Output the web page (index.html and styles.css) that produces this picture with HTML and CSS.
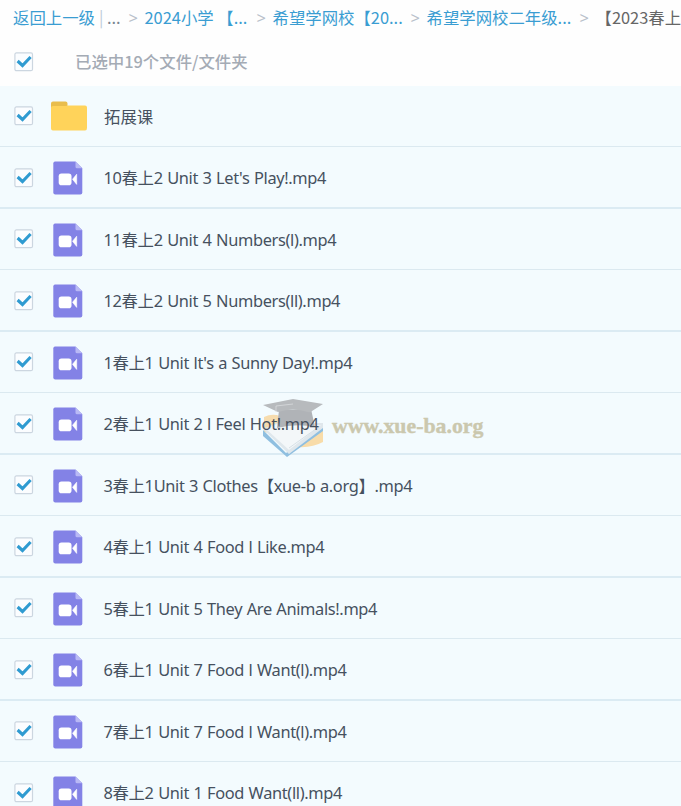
FILE: index.html
```html
<!DOCTYPE html>
<html lang="zh-CN">
<head>
  <meta charset="UTF-8">
  <meta name="viewport" content="width=device-width, initial-scale=1.0">
  <title>文件列表</title>
  <link rel="stylesheet" href="styles.css">
</head>
<body>

  <!-- shared icons -->
  <svg class="icon-defs" width="0" height="0">
    <symbol id="check" viewBox="0 0 20 20">
      <rect x="0.9" y="0.9" width="17.6" height="17.8" rx="1.5" fill="#fbfdff" stroke="#ccd6e0" stroke-width="1.2"/>
      <path d="M3.6 9 L8.5 13.5 L16.6 5" fill="none" stroke="#2f9bd1" stroke-width="3.1"/>
    </symbol>
    <symbol id="folder" viewBox="0 0 36 30">
      <path d="M0 12 V2.5 Q0 0.5 2 0.5 H14.5 Q16.5 0.5 16.5 2.5 V7 H0 Z" fill="#e9bd4c"/>
      <path d="M0 6.5 Q0 5 2 5 H15 L17 4.5 H34 Q36 4.5 36 6.5 V27 Q36 29.5 34 29.5 H2 Q0 29.5 0 27.5 Z" fill="#ffd35a"/>
    </symbol>
    <symbol id="video" viewBox="0 0 30 34">
      <path d="M2 0.5 H22.5 L29.3 7.3 V31.5 Q29.3 33.5 27.3 33.5 H2.3 Q0.3 33.5 0.3 31.5 V2.5 Q0.3 0.5 2 0.5 Z" fill="#8382e6"/>
      <path d="M22.5 0.5 L29.3 7.3 H24 Q22.5 7.3 22.5 5.8 Z" fill="#b9b9f5"/>
      <rect x="5.7" y="12.4" width="12.8" height="11.8" rx="2.8" fill="#fff"/>
      <path d="M19.5 18.3 L23.7 13.2 V23.4 Z" fill="#fff" stroke="#fff" stroke-width="0.6" stroke-linejoin="round"/>
    </symbol>
  </svg>

  <nav class="breadcrumb">
    <a class="crumb crumb-back">返回上一级</a><span class="divider">|</span><span class="dots">...</span>
    <span class="arrow">&gt;</span>
    <a class="crumb crumb-year">2024小学 【...</a>
    <span class="arrow">&gt;</span>
    <a class="crumb crumb-school">希望学网校【20...</a>
    <span class="arrow">&gt;</span>
    <a class="crumb crumb-grade">希望学网校二年级...</a>
    <span class="arrow">&gt;</span>
    <span class="current">【2023春上</span>
  </nav>

  <div class="selection">
    <svg class="check"><use href="#check"/></svg>
    <span class="selection-text">已选中19个文件/文件夹</span>
  </div>

  <ul class="file-list">
    <li class="file"><svg class="check"><use href="#check"/></svg><svg class="folder"><use href="#folder"/></svg><span class="name">拓展课</span></li>
    <li class="file"><svg class="check"><use href="#check"/></svg><svg class="video"><use href="#video"/></svg><span class="name">10春上2 Unit 3 Let's Play!.mp4</span></li>
    <li class="file"><svg class="check"><use href="#check"/></svg><svg class="video"><use href="#video"/></svg><span class="name">11春上2 Unit 4 Numbers(l).mp4</span></li>
    <li class="file"><svg class="check"><use href="#check"/></svg><svg class="video"><use href="#video"/></svg><span class="name">12春上2 Unit 5 Numbers(ll).mp4</span></li>
    <li class="file"><svg class="check"><use href="#check"/></svg><svg class="video"><use href="#video"/></svg><span class="name">1春上1 Unit lt's a Sunny Day!.mp4</span></li>
    <li class="file"><svg class="check"><use href="#check"/></svg><svg class="video"><use href="#video"/></svg><span class="name">2春上1 Unit 2 l Feel Hot!.mp4</span></li>
    <li class="file"><svg class="check"><use href="#check"/></svg><svg class="video"><use href="#video"/></svg><span class="name">3春上1Unit 3 Clothes【xue-b a.org】.mp4</span></li>
    <li class="file"><svg class="check"><use href="#check"/></svg><svg class="video"><use href="#video"/></svg><span class="name">4春上1 Unit 4 Food l Like.mp4</span></li>
    <li class="file"><svg class="check"><use href="#check"/></svg><svg class="video"><use href="#video"/></svg><span class="name">5春上1 Unit 5 They Are Animals!.mp4</span></li>
    <li class="file"><svg class="check"><use href="#check"/></svg><svg class="video"><use href="#video"/></svg><span class="name">6春上1 Unit 7 Food l Want(l).mp4</span></li>
    <li class="file"><svg class="check"><use href="#check"/></svg><svg class="video"><use href="#video"/></svg><span class="name">7春上1 Unit 7 Food l Want(l).mp4</span></li>
    <li class="file"><svg class="check"><use href="#check"/></svg><svg class="video"><use href="#video"/></svg><span class="name">8春上2 Unit 1 Food Want(ll).mp4</span></li>
  </ul>

  <div class="watermark">
    <svg class="watermark-logo" viewBox="0 0 62 60">
      <path d="M2 19 Q10 15 18 18 L28 40 L2 34 Z" fill="#f6dcae"/>
      <path d="M34 44 L61 27 V44 Q50 50 36 49 Z" fill="#f8dca9"/>
      <path d="M1 32 L24 55 L61 28 V33 L25 59 L1 38 Z" fill="#8fbfe0"/>
      <path d="M1 31 L14 25 L61 25 V30 L27 56 Z" fill="#dfe7ec"/>
      <path d="M4 31 L15 26 L59 27 L27 52 Z" fill="#f3f7f9"/>
      <path d="M27 50 L58 28" fill="none" stroke="#cfdae1" stroke-width="0.8"/>
      <path d="M17 12 L49 11 L53 29 Q34 25 15 30 Z" fill="#b0b3b7"/>
      <path d="M1 7 L31 1 L61 6 L50 13 Q48 15 46 14 Q31 9 16 14 Z" fill="#b7babd"/>
      <path d="M31 6 L14 8 V14" fill="none" stroke="#d8dadd" stroke-width="0.8"/>
    </svg>
    <span class="watermark-text">www.xue-ba.org</span>
  </div>

</body>
</html>
```

FILE: styles.css
```css
body {
  margin: 0;
  height: 806px;
  overflow: hidden;
  position: relative;
  background: #fefefe;
  font-family: "Noto Sans", "Noto Sans CJK SC", sans-serif;
  font-size: 16.4px;
  color: #46515e;
}
.icon-defs {
  display: none;
}
.breadcrumb {
  display: flex;
  align-items: center;
  height: 34px;
  padding-left: 13px;
  white-space: nowrap;
  font-family: "Noto Sans CJK SC", sans-serif;
}
.crumb {
  color: #3a9dd2;
  flex: none;
}
.crumb-back {
  width: 83px;
}
.crumb-year {
  width: 105px;
}
.crumb-school {
  width: 131px;
}
.crumb-grade {
  width: 146px;
}
.divider {
  flex: none;
  width: 8px;
  margin-left: 3px;
  color: #bccbd8;
}
.dots {
  flex: none;
  width: 14.5px;
  color: #788590;
}
.arrow {
  flex: none;
  width: 9px;
  margin: 0 7px;
  color: #b9c1cb;
  font-family: "Noto Sans", sans-serif;
}
.current {
  color: #666;
}
.selection {
  display: flex;
  align-items: center;
  box-sizing: border-box;
  height: 52px;
  padding: 2px 0 0 14px;
}
.selection .check {
  margin-top: 2px;
}
.selection-text {
  margin-left: 41px;
  color: #a4abb5;
  font-family: "Noto Sans CJK SC", sans-serif;
  font-weight: 500;
}
.check {
  flex: none;
  width: 20px;
  height: 20px;
}
.file-list {
  margin: 0;
  padding: 0;
  list-style: none;
}
.file {
  display: flex;
  align-items: center;
  box-sizing: border-box;
  height: 61px;
  padding-left: 14px;
  border-bottom: 1px solid #dbe9f0;
  background: #f3fbfe;
}
.file:nth-child(even) {
  height: 62px;
  border-bottom: 2px solid #dbebf3;
}
.file:nth-child(even) .check {
  margin-top: 1px;
}
.folder {
  width: 36px;
  height: 30px;
  margin: 0 17px 0 17px;
}
.video {
  width: 30px;
  height: 34px;
  margin: 2px 20.5px 0 19px;
}
.name {
  position: relative;
  z-index: 2;
  white-space: nowrap;
  letter-spacing: -0.35px;
  word-spacing: 0.6px;
}
.file:first-child .name {
  letter-spacing: 0;
}
.watermark {
  position: absolute;
  z-index: 1;
  left: 262px;
  top: 398px;
  display: flex;
  align-items: center;
}
.watermark-logo {
  width: 62px;
  height: 60px;
}
.watermark-text {
  margin: 0 0 3px 8px;
  color: #cbc8ae;
  font-family: "Liberation Serif", serif;
  font-size: 21.8px;
  font-weight: bold;
  -webkit-text-stroke: 0.4px #cbc8ae;
}
```
